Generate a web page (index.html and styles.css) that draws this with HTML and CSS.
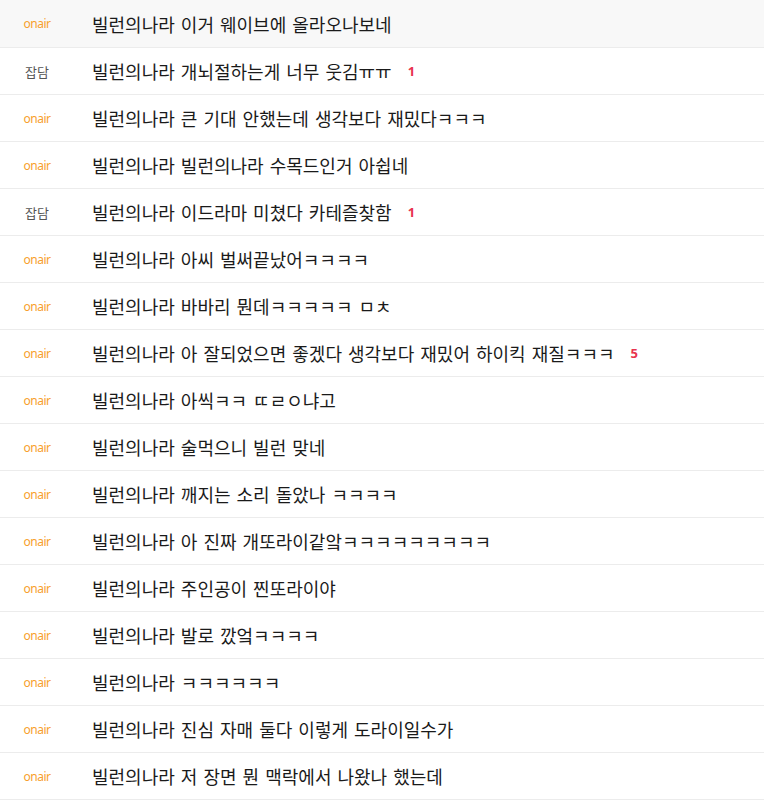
FILE: index.html
```html
<!DOCTYPE html>
<html lang="ko">
<head>
  <meta charset="UTF-8">
  <meta name="viewport" content="width=device-width, initial-scale=1.0">
  <title>빌런의나라 게시판</title>
  <link rel="stylesheet" href="styles.css">
</head>
<body>
  <ul class="board">
    <li class="row notice"><span class="tag onair">onair</span><a class="title">빌런의나라 이거 웨이브에 올라오나보네</a></li>
    <li class="row"><span class="tag talk">잡담</span><a class="title">빌런의나라 개뇌절하는게 너무 웃김ㅠㅠ</a><span class="cmt">1</span></li>
    <li class="row"><span class="tag onair">onair</span><a class="title">빌런의나라 큰 기대 안했는데 생각보다 재밌다ㅋㅋㅋ</a></li>
    <li class="row"><span class="tag onair">onair</span><a class="title">빌런의나라 빌런의나라 수목드인거 아쉽네</a></li>
    <li class="row"><span class="tag talk">잡담</span><a class="title">빌런의나라 이드라마 미쳤다 카테즐찾함</a><span class="cmt">1</span></li>
    <li class="row"><span class="tag onair">onair</span><a class="title">빌런의나라 아씨 벌써끝났어ㅋㅋㅋㅋ</a></li>
    <li class="row"><span class="tag onair">onair</span><a class="title">빌런의나라 바바리 뭔데ㅋㅋㅋㅋㅋ ㅁㅊ</a></li>
    <li class="row"><span class="tag onair">onair</span><a class="title">빌런의나라 아 잘되었으면 좋겠다 생각보다 재밌어 하이킥 재질ㅋㅋㅋ</a><span class="cmt">5</span></li>
    <li class="row"><span class="tag onair">onair</span><a class="title">빌런의나라 아씩ㅋㅋ ㄸㄹㅇ냐고</a></li>
    <li class="row"><span class="tag onair">onair</span><a class="title">빌런의나라 술먹으니 빌런 맞네</a></li>
    <li class="row"><span class="tag onair">onair</span><a class="title">빌런의나라 깨지는 소리 돌았나 ㅋㅋㅋㅋ</a></li>
    <li class="row"><span class="tag onair">onair</span><a class="title">빌런의나라 아 진짜 개또라이같앜ㅋㅋㅋㅋㅋㅋㅋㅋㅋ</a></li>
    <li class="row"><span class="tag onair">onair</span><a class="title">빌런의나라 주인공이 찐또라이야</a></li>
    <li class="row"><span class="tag onair">onair</span><a class="title">빌런의나라 발로 깠엌ㅋㅋㅋㅋ</a></li>
    <li class="row"><span class="tag onair">onair</span><a class="title">빌런의나라 ㅋㅋㅋㅋㅋㅋ</a></li>
    <li class="row"><span class="tag onair">onair</span><a class="title">빌런의나라 진심 자매 둘다 이렇게 도라이일수가</a></li>
    <li class="row"><span class="tag onair">onair</span><a class="title">빌런의나라 저 장면 뭔 맥락에서 나왔나 했는데</a></li>
  </ul>
</body>
</html>
```

FILE: styles.css
```css
body {
  margin: 0;
  padding: 0;
  background-color: #fff;
  font-family: "Noto Sans CJK KR", "Noto Sans", sans-serif;
}

.board {
  list-style: none;
  margin: 0;
  padding: 0;
}

.row {
  display: flex;
  align-items: center;
  height: 46px;
  border-bottom: 1px solid #ececec;
}

.row:first-child {
  height: 47px;
}

.row.notice {
  background-color: #f8f8f8;
}

.tag {
  width: 74px;
  flex-shrink: 0;
  text-align: center;
  font-size: 12px;
  letter-spacing: -0.5px;
}

.tag.onair {
  color: #f7a02c;
  font-family: "Noto Sans", sans-serif;
}

.tag.talk {
  color: #555;
  font-size: 13px;
  letter-spacing: 0;
}

.title {
  margin-left: 18px;
  font-size: 18px;
  word-spacing: 1px;
  color: #1a1a1a;
  text-decoration: none;
  white-space: nowrap;
}

.cmt {
  margin-left: 16px;
  font-family: "Noto Sans", sans-serif;
  font-size: 13px;
  font-weight: bold;
  color: #e8334e;
}
```
